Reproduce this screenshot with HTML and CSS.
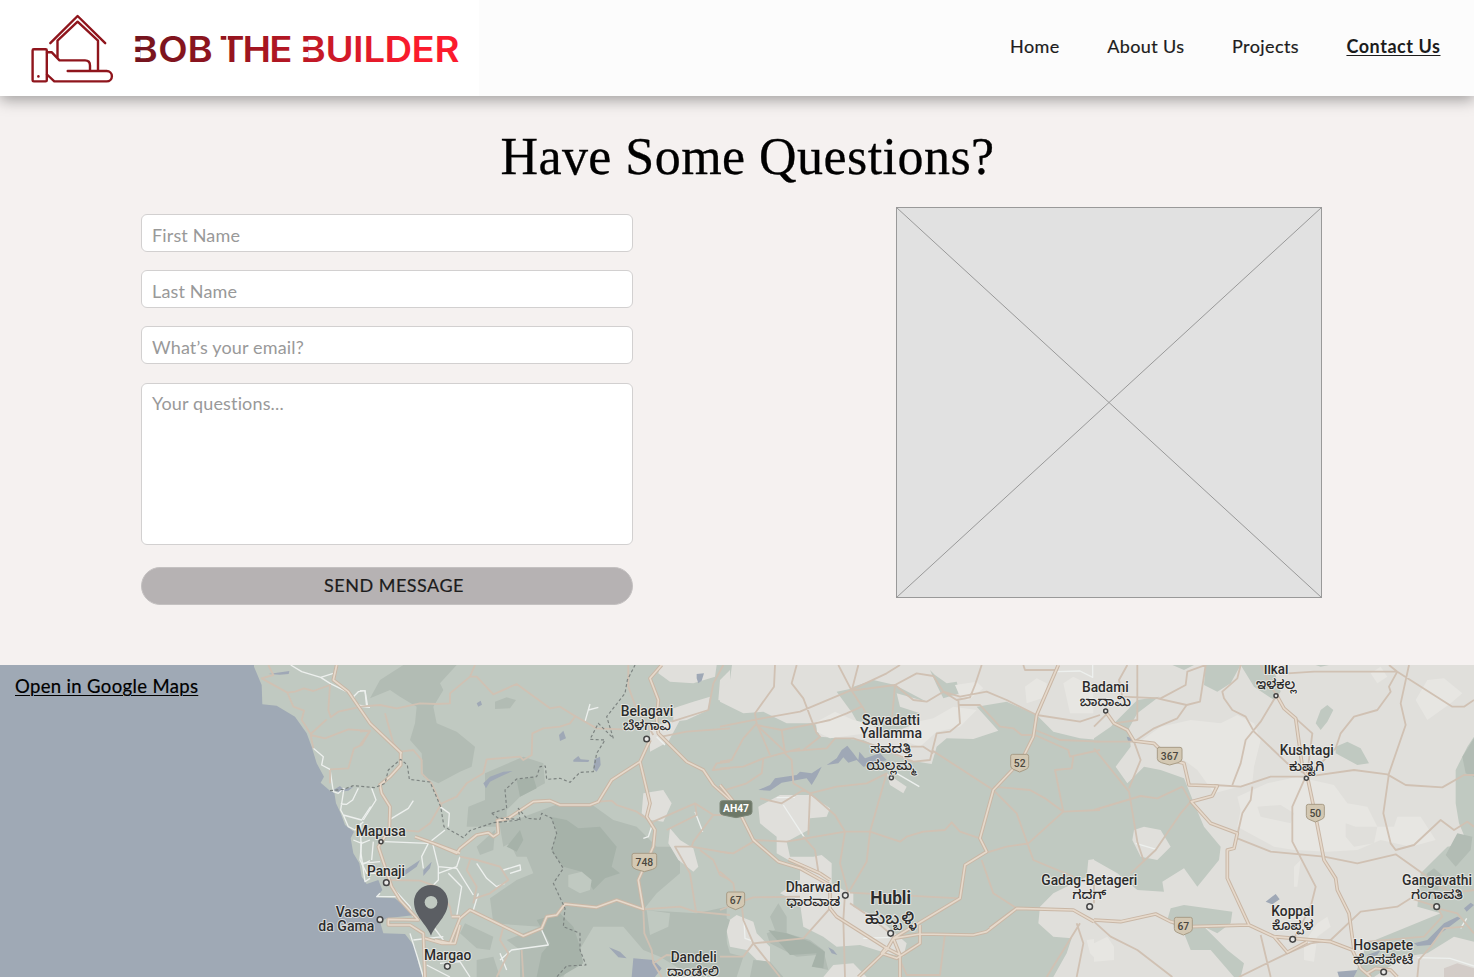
FILE: index.html
```html
<!DOCTYPE html>
<html lang="en">
<head>
<meta charset="utf-8">
<title>Bob the Builder – Contact Us</title>
<link rel="stylesheet" href="styles.css">
</head>
<body>
<header class="site-header">
  <a class="brand" href="#" aria-label="Bob the Builder">
    <svg class="brand-art" viewBox="0 0 479 96" width="479" height="96">
      <defs>
        <linearGradient id="brandRed" gradientUnits="userSpaceOnUse" x1="123" y1="0" x2="418" y2="0">
          <stop offset="0" stop-color="#73141f"/><stop offset=".3" stop-color="#96141f"/><stop offset=".65" stop-color="#d31a29"/><stop offset=".85" stop-color="#fb1b2d"/><stop offset="1" stop-color="#fb1b2d"/>
        </linearGradient>
      </defs>
      <g class="brand-mark">
        <path d="M50.3 43.2 77.6 16 105.2 43.2"/>
        <path d="M57.5 57V40.6L77.6 21.7 98 40.6V70.5"/>
        <rect x="32.6" y="49.2" width="14.2" height="32.2" rx="1.2"/>
        <path d="M47 52.2h4.6L59.500 60.400H85q5 0 5 5V70.500"/>
        <path d="M67.700 71h39a5.200 5.200 0 0 1 0 10.400H54.300L47 74.500"/>
        <circle class="brand-button" cx="38.400" cy="76.400" r="1.300"/>
      </g>
      <text class="brand-name" transform="scale(1.1 1)" y="62" x="120.400 143.800 170.400 199.400 220.400 244.900 273.100 296 320.800 330.400 349.500 374 394.900">BOBTHEBUILDER</text>
      <g class="brand-cut">
        <path d="M134 41.500h6.500v5.300h-6.500zM134 52h6.500v5.300h-6.500zM302 41.500h6.500v5.300h-6.500zM302 52h6.500v5.300h-6.500zM226.300 35h1.500v8h-1.500z"/>
      </g>
    </svg>
  </a>
  <nav class="nav">
    <a class="nav-home" href="#">Home</a>
    <a class="nav-about" href="#">About Us</a>
    <a class="nav-projects" href="#">Projects</a>
    <a class="nav-current" href="#">Contact Us</a>
  </nav>
</header>
<main>
  <section class="contact">
    <h1>Have Some Questions?</h1>
    <div class="columns">
      <form class="form">
        <input class="field" type="text" placeholder="First Name">
        <input class="field" type="text" placeholder="Last Name">
        <input class="field" type="email" placeholder="What’s your email?">
        <textarea class="field area" placeholder="Your questions..."></textarea>
        <button class="send" type="button">SEND MESSAGE</button>
      </form>
      <svg class="placeholder" viewBox="0 0 426 391" width="426" height="391">
        <rect x=".5" y=".5" width="425" height="390"/>
        <path d="M.5.5 425.500 390.500M425.500.5.5 390.500"/>
      </svg>
    </div>
  </section>
  <section class="map">
    <svg class="map-art" viewBox="0 15 4422 936" width="1474" height="312">
      <!-- land -->
      <path class="green" d="M762 0 762 20 785 75 787 133 830 137 885 170 920 220 935 260 950 310 972 350 962 368 990 392 1003 398 1008 430 1022 460 1035 495 1062 515 1052 535 1060 580 1078 610 1085 650 1100 672 1135 660 1147 690 1130 712 1185 715 1245 765 1160 775 1140 785 1150 820 1215 822 1245 860 1255 910 1270 960H4422V0Z"/>
      <g transform="translate(1080 0)">
        <path class="green-dark" d="M60 60 130 15H290L240 70 250 90 220 140 230 190 290 215 345 260 335 320 300 335 235 370 190 350 185 280 150 240 165 190 170 140 120 110 90 90 30 115ZM405 125 440 112 468 120 450 145 405 147ZM375 340 490 290 550 310 555 370 480 410 440 450 440 490 600 430 690 430 760 480 830 500 890 560 960 560 960 640 890 700 850 750 1010 760 1100 740V951H1000L900 890 850 870 790 800 700 800 610 951H480V870L440 840 540 800 400 790 390 715 470 660 520 640 500 590 470 590 450 550 430 560 420 500 320 500 325 440 375 420ZM350 560 405 510 400 570 360 585ZM315 790 400 830 390 870 350 865 300 820ZM350 900 400 890 420 951H350Z"/>
        <path class="green-deep" d="M570 470 620 480 655 505 720 500 770 560 755 620 780 640 735 655 700 690 665 635 610 620 575 575 590 510ZM530 780 600 760 640 800 660 860 670 910 600 951H530L545 880 570 850ZM470 360 520 350 530 385 480 410ZM440 560 480 510 490 540 470 575Z"/>
        <path class="green" d="M625 645 665 635 695 660 690 690 660 700 625 680ZM860 750 930 760 925 800 870 825Z"/>
        <path class="grey" d="M900 15H1070L1065 50 1000 70 930 65 895 40ZM940 145 1000 125 1050 110 1045 150 980 180 940 185ZM1110 30 1080 60 1075 120 1110 130ZM850 400 910 390 935 430 910 485 870 480 845 460ZM930 505 960 540 1000 565 1015 620 1000 635 955 600 925 550ZM870 200 960 180 925 245 870 275Z"/>
        <path class="water" d="M350 130 362 122 366 134 355 140ZM597 225 610 212 618 235 600 243ZM640 300 655 288 662 298 688 300 685 306 640 305ZM703 298 720 290 722 315 710 335 700 328ZM370 370 390 350 430 335 458 333 420 350 390 365 378 385ZM135 630 180 600 170 620 135 645ZM190 630 215 605 210 625 190 648ZM1010 42 1032 40 1025 62 1015 70 1010 55ZM747 862 780 875 800 895 775 892ZM820 895 880 900 905 925 885 951H815Z"/>
      </g>
      <path class="water" d="M805 42 868 33 866 42 840 44ZM1000 390 1020 378 1030 388 1060 380 1045 392 1015 396Z"/>
      <g transform="translate(2160 0)">
        <path class="grey" d="M38 0 30 60 0 90V125L70 160 130 155 200 190 285 190 300 230 430 240 560 300 635 312 650 260 680 235 760 237 835 212 770 140 860 125 950 165 1000 215 1080 235 1140 240V0ZM115 440 180 405 270 405 330 445 320 470 270 475 265 510 200 545 210 590 280 590 305 585 335 610 335 670 370 690 400 700 400 740 470 770 560 850 550 890 500 880 420 855 350 860 310 830 250 800 240 730 180 700 240 660 240 620 170 580 170 530 120 490ZM15 790 50 765 100 785 110 820 150 860 150 905 110 900 80 870 30 860ZM500 340 560 380 550 400 510 375ZM310 951 340 915 400 910 440 951ZM1140 595 1105 600 1100 650 1000 700 960 740 955 790 1000 830 1055 835 1040 880 1000 951H1140Z"/>
        <path class="green" d="M400 80 460 60 525 75 620 125 530 100 540 140 600 160 590 190 500 225 450 190 420 200 380 130ZM350 95 400 85 435 140 390 150ZM630 30 645 45 680 70 710 65 720 100 670 115 650 75Z"/>
        <path class="light" d="M290 185 345 155 400 180 440 190 440 220 330 235 290 215ZM570 190 640 175 700 140 770 150 720 200 650 215 600 260 560 245ZM705 75 770 65 790 85 745 120 720 110ZM915 80 950 55 980 70 980 110 920 130ZM1030 70 1060 50 1120 80 1120 160 1050 160ZM1100 840 1140 835V910L1110 880Z"/>
        <path class="green-dark" d="M150 770 175 730 200 770 200 820 270 840 310 870 325 930 280 920 290 885 230 890 150 850 140 820 165 810ZM0 765 30 780 15 830 30 880 70 890 50 951H0ZM100 900 150 905 190 951H90Z"/>
        <path class="green-deep" d="M145 810 200 820 270 845 315 875 310 925 275 920 290 880 210 885Z"/>
        <path class="water" d="M115 390 150 375 165 355 230 345 240 335 275 340 305 320 290 350 275 375 260 355 185 368 150 392ZM320 315 350 295 365 270 382 257 400 280 415 300 418 275 435 295 480 280 500 300 460 315 430 320 410 300 385 308 370 292 355 310ZM325 862 340 870 352 885 335 880Z"/>
      </g>
      <g transform="translate(3282 0)">
        <path class="grey" d="M0 0H1140V960H0Z"/>
        <path class="green" d="M0 235 50 200 130 120 195 110 130 160 105 205 110 260 65 320 100 370 150 320 200 330 270 355 300 430 330 500 380 560 375 600 310 680 270 625 205 665 210 695 130 690 70 640 0 600ZM335 15H440L410 70 370 95 330 75ZM440 15H535L560 95 540 120 480 80ZM665 190 680 150 700 135 718 150 700 185 680 210ZM725 260 760 245 800 265 825 310 790 315 725 280ZM230 745 270 735 415 755 410 790 370 820 330 800 400 870 450 910 440 951H420L350 870 290 870 270 820 220 780ZM1140 230 1120 260 1085 330 1085 430 1095 490 1120 550 1060 560 980 640 970 740 1040 760 820 850 780 951H840L930 890 1000 880 1080 830 1140 845ZM235 15H300L270 30ZM665 15H705L680 20Z"/>
        <path class="green-dark" d="M1140 235 1105 290 1115 340 1140 350ZM1090 520 1135 530 1130 570 1085 620 1055 585ZM1000 640 1020 625 1050 650 1030 690 980 680Z"/>
        <path class="grey" d="M115 540 120 510 150 500 200 510 230 560 190 600 140 590Z"/>
        <path class="light" d="M145 240 200 200 290 180 380 190 430 165 480 190 500 240 480 320 475 370 360 400 310 330 270 300 200 260ZM430 410 520 370 610 350 720 375 760 430 820 440 850 500 900 500 910 470 980 470 1025 540 950 560 860 540 790 570 700 575 600 570 540 560 430 500 440 450ZM965 120 1000 60 1050 55 1105 100 1070 130 1000 180ZM600 620 620 600 610 680 600 680ZM630 850 670 790 700 770 710 800 670 830 660 905 630 900ZM0 850 40 830 60 860 60 900 0 905ZM830 40 860 20 880 50 850 70Z"/>
        <path class="grey" d="M510 260 540 240 580 280 560 300ZM490 440 560 435 600 460 590 490 500 470ZM755 490 785 500 850 500 840 550 780 560 755 530Z"/>
        <path class="water" d="M515 725 545 702 557 718 535 733ZM98 230 118 235 122 248 102 242ZM960 850 1000 840 1050 790 1090 770 1100 775 1040 820 1010 855 970 858ZM1110 745 1130 728 1140 735 1118 755ZM730 935 790 930 780 951H735ZM820 885 860 870 850 885 820 895Z"/>
        <path class="rose" d="M1050 925 1090 910 1140 925V951H1050Z"/>
      </g>
      <!-- minor white roads -->
      <g class="white-road">
        <path d="M872 15 905 35 962 52 990 70 1040 95M962 52 1000 40M1060 110 1075 95 1095 92 1103 140 1072 135M1060 110 1072 138 1110 142M940 265 970 290 965 315 990 328 1000 395 1015 400 1032 385 1022 450 1030 465 1085 480 1112 440M1075 385 1058 420 1040 433 1022 432M1030 465 1045 500 1065 510 1090 485M1060 540 1085 550 1110 540M1082 490 1083 580 1095 665 1110 655M1085 615 1110 602"/>
        <g transform="translate(1080 0)"><path d="M0 92 15 92 20 140M35 385 48 420 10 480M160 422 145 445 90 478M75 545 205 550 185 590 190 625M205 550 255 510M218 550 235 620 235 660 215 680M235 640 290 620 300 590M265 640 305 680 290 770M235 620 290 625 340 705M350 610 380 655 410 680 435 670M430 630 480 615 482 630 450 640M5 545 0 600 20 640 60 640M5 610 60 605M40 545 35 600M60 700 50 710 110 710M95 680 150 740 160 770M150 820 175 900 190 951M160 840 250 830M340 750 355 700M545 810 565 855 455 870 420 900M240 440 268 460 265 500M675 185 690 132M685 150 715 142M850 535 865 530 875 500M1005 455 1028 515M890 230 915 255M210 690 220 800 250 840M240 910 300 905 330 951M200 915 270 951M420 880 440 930"/></g>
        <g transform="translate(2160 0)"><path d="M190 435 255 535M170 413 225 412M530 340 598 380M72 780 75 835 95 842M430 835 510 832M1010 35 1080 33 1118 52V15"/></g>
        <g transform="translate(3282 0)"><path d="M125 550 187 568M970 893 1068 895 1140 918M1100 805 1118 775"/></g>
      </g>
      <!-- secondary roads -->
      <g class="minor-road">
        <path d="M805 15 820 45 785 55 862 98 885 95 912 85 940 93 990 75 985 150 992 172 1015 155 1070 143M862 98 880 140 912 152 905 180 932 222 980 178M932 225 975 235 1045 208 1110 213 1085 255 1062 265 1045 325 990 328M932 225 940 265M990 330V370"/>
        <g transform="translate(1080 0)"><path d="M345 15 330 50 350 50 400 103 470 72 570 145 600 140 640 165 710 205 790 208M330 50 270 100 270 130 230 132 180 130 110 145 60 135 0 140M645 170 630 190 600 200 550 205 517 220 515 285 490 300 480 290 380 298 370 340 320 370 290 410 245 430 210 490 175 515 125 510M75 160 100 250 122 275 160 270 185 300 185 340 215 370 245 440M300 590 350 600 420 620 445 660 390 700 345 715M330 600 320 630 350 680 340 730M430 800 420 840 445 880 410 951M485 870 490 951M805 15 805 80 825 135 880 225M715 425 755 422 770 435 830 455 880 490M880 485 1005 430 1010 465 920 510M1005 430 1060 465 1110 465M1060 465 1000 545 995 560 945 560 990 640 1008 755M995 560 1110 580M1020 570 1060 600 1080 645 1110 660M850 748 960 740 1005 755 1110 765M850 748 853 820 875 870 880 910 905 951M905 230 980 215 1110 205M935 185 1045 150 1060 70 1090 15M1110 305 1070 310 1058 330 1110 325M0 215 30 212 0 255M880 910 920 885 980 890M90 660 180 662 230 680 270 740 275 770"/></g>
        <g transform="translate(2160 0)"><path d="M165 15 162 80 105 160 110 190 70 235 35 300 0 305M230 15 215 70 250 115 290 220 300 230 250 270M0 200 110 178 240 155 390 92 500 40 540 15M355 15 395 92 415 15M395 92 525 75 590 40 640 48 670 95 710 120 750 112 765 75 785 15M395 92 430 145 440 165M525 75 515 190M525 75 580 120 620 125 670 95M670 95 720 110 800 95 860 120 950 165 1080 185 1140 165M715 120 720 190 690 215 650 220 630 300 580 305 460 255 400 235 345 235 320 265 195 275 110 195 185 210 285 190 330 180 380 160 425 140M185 210 195 280 215 300 220 370 270 400M0 325 70 320 130 295 240 265M110 190 150 285M130 295 125 340 80 370 0 395M120 415 185 430 250 390 270 400 345 465 375 515 450 515 500 340 440 370 350 380 270 400 265 525M100 540 200 545 375 515 360 610 385 700M250 530 285 570 295 635M450 515 440 605 390 690M450 515 540 545 560 530 610 515 675 510 695 487 720 515 780 535M0 575 40 580 100 545M635 270 820 390 890 460 940 600 1060 650M715 135 780 135 840 200 880 205 905 225 945 225 1045 270 1050 290 1140 270M945 210 1020 240 1140 245M820 380 930 390 975 415 1030 455 1140 450M1060 290 1055 325 1005 330 1030 455 925 550 860 560 800 578M785 600 820 700 890 745M390 698 720 715M240 710 100 712 0 750M375 700 370 780 375 951M330 745 250 835 100 850 180 951M0 890 70 890 100 850 70 780 65 730M675 820 660 945 560 945 540 900M1070 790 1090 850 1070 951M1080 790 980 951M0 635 40 670 45 700M565 260 610 260 640 280M390 730 450 770 510 820M910 15 915 30 1010 30"/></g>
        <g transform="translate(3282 0)"><path d="M130 15V180L60 190M100 15 75 60 85 110 200 115 275 75 280 35 335 15 318 125 278 135 190 115M440 15 430 55 385 95 390 115 415 150 455 170 480 215 580 310 640 345M545 110 500 185 455 240 440 310 415 375M278 135 250 175 180 205 120 245 0 245M0 265 105 395 130 545 150 605M0 450 140 408 190 415 265 380M120 245 140 300 105 385M290 425 260 460 185 570 110 640M265 380 290 425M360 375 440 380 530 350 640 350 780 330 880 343 935 375 1045 382 1110 345 1140 345M475 380 470 420 445 460 430 525M430 535 530 575 690 590 790 610 905 583 1000 650 1070 700 1140 690M580 40 660 35 910 35 1075 140 1110 140 1140 120M910 35 885 80 890 95 850 150 780 170 740 220 725 265 670 320 640 345M945 15 920 130 935 195 885 340 868 460 890 550 905 570 960 555 1040 480 1080 510 1120 485 1140 500M635 350 595 440 595 545 665 680 650 740 600 835M605 175 655 220 640 340M0 785 50 830 130 870 235 951M500 825 530 951M435 951 580 880 650 850 710 840 800 755 910 740 950 715 1030 740 1045 770 990 830 820 845M1140 820 1090 760 1010 740M1110 800 1050 805 1010 860 975 900 970 951M0 670 0 730M0 200 40 160M500 15 530 80 545 100M885 15 910 35"/></g>
      </g>
      <!-- major roads: casing below, fill above -->
      <g class="major-case">
        <g id="major">
          <path d="M1010 15 1000 60 1045 95 1110 190 1205 280"/>
          <g transform="translate(1080 0)"><path d="M122 275V315L90 350 60 375 65 400 90 440 88 510 55 560 75 620 95 680 120 720 175 780 85 778 85 795 150 795 190 820 195 951M165 530 220 550 290 580 300 565 350 525 385 518 400 530 415 520 412 482 445 475 520 425 570 422 600 435 690 435 715 425 755 360 840 305 870 240M840 305 870 430 860 470 885 510 880 560 835 660 850 748 770 720 710 742 615 732 590 765 560 770 545 805 490 828 330 750 300 775 270 850 225 840M300 580 220 550M195 835 245 850 285 850 300 795M905 15 870 55 895 120 890 180 895 220 980 305 1030 330 1060 375 1110 420M275 770H300"/></g>
          <g transform="translate(2160 0)"><path d="M0 375 45 430 100 540 175 605 240 625 330 675 330 745 350 770 500 865 540 885V951M205 598 300 640 330 660M1015 15 950 165 940 230 905 300 820 390 780 535 800 575 735 615 720 715 520 835 500 870 415 951M520 835 600 822 760 825 800 815 890 745 1060 750 1122 785M600 795V850L530 895 485 880 500 860M520 835 540 885M810 805 890 745"/></g>
          <g transform="translate(3282 0)"><path d="M35 155 60 190 100 210 120 243 180 250 230 300 270 310 285 375 370 378 355 408 292 425 350 490 430 520 420 565 400 570V655L465 795 290 800 230 785 185 762 80 785 0 780M465 795 540 830 710 845 775 870 800 925 830 951M545 100 570 145 605 175 625 320 640 350 665 470 690 600 725 655 730 690 765 760 780 870M540 830 580 877 640 845M820 940 845 925 890 930 910 951"/></g>
        </g>
      </g>
      <use class="major-fill" href="#major"/>
      <g class="border">
        <path d="M990 392 1030 388 1060 377 1125 383 1155 370 1165 330 1202 298 1222 315 1228 358 1290 366 1322 440 1332 500 1390 533 1410 512 1480 488 1560 480 1555 445 1580 475 1620 478 1625 460 1655 475 1670 520 1655 570 1690 625 1660 670 1695 745 1690 800 1740 820V870L1758 915 1700 918 1670 951M1475 460 1520 445 1515 390 1550 357 1610 350 1620 320 1636 318 1640 358 1680 355 1710 367 1740 337 1780 335 1790 280 1815 240 1770 238 1795 190 1840 235 1820 170 1875 100 1882 60 1905 15M1475 460 1495 475 1560 478"/>
      </g>
      <!-- route shields -->
      <g class="shield">
        <path d="M1902 580h62q6 0 6 6v30q0 8-12 12l-25 7-25-7q-12-4-12-12v-30q0-6 6-6ZM2186 696h42q6 0 6 6v28q0 8-8 11l-19 8-19-8q-8-3-8-11v-28q0-6 6-6ZM3038 283h42q6 0 6 6v28q0 8-8 11l-19 8-19-8q-8-3-8-11v-28q0-6 6-6ZM3478 262h62q6 0 6 6v28q0 8-12 12l-25 7-25-7q-12-4-12-12v-28q0-6 6-6ZM3925 433h42q6 0 6 6v28q0 8-8 11l-19 8-19-8q-8-3-8-11v-28q0-6 6-6ZM3529 772h42q6 0 6 6v28q0 8-8 11l-19 8-19-8q-8-3-8-11v-28q0-6 6-6Z"/>
        <path class="shield-ah" d="M2167 422h82q7 0 7 7v27q0 7-9 9l-39 8-39-8q-9-2-9-9v-27q0-7 7-7Z"/>
      </g>
      <g class="shield-text">
        <text x="1933" y="618">748</text><text x="2207" y="733">67</text><text x="3059" y="321">52</text><text x="3509" y="300">367</text><text x="3946" y="471">50</text><text x="3550" y="809">67</text><text class="ah-text" x="2208" y="457">AH47</text>
      </g>
      <!-- towns -->
      <g class="town">
        <circle cx="1143" cy="545" r="6"/><circle cx="1159" cy="668" r="8.500"/><circle cx="1140" cy="779" r="8.500"/><circle cx="1342" cy="919" r="8.500"/><circle cx="1940" cy="237" r="8.500"/><circle cx="2674" cy="353" r="6"/><circle cx="2536" cy="706" r="8.500"/><circle cx="2672" cy="820" r="8.500"/><circle cx="3269" cy="740" r="8.500"/><circle cx="3317" cy="153" r="6"/><circle cx="3828" cy="107" r="6"/><circle cx="3919" cy="355" r="6"/><circle cx="3878" cy="838" r="8.500"/><circle cx="4310" cy="740" r="8.500"/><circle cx="4151" cy="936" r="8.500"/>
      </g>
      <g class="label">
        <text x="1142" y="528" textLength="150" lengthAdjust="spacingAndGlyphs">Mapusa</text>
        <text x="1158" y="648" textLength="114" lengthAdjust="spacingAndGlyphs">Panaji</text>
        <text x="1065" y="770" textLength="116" lengthAdjust="spacingAndGlyphs">Vasco</text>
        <text x="1039" y="812" textLength="168" lengthAdjust="spacingAndGlyphs">da Gama</text>
        <text x="1343" y="899" textLength="142" lengthAdjust="spacingAndGlyphs">Margao</text>
        <text x="1941" y="169" textLength="158" lengthAdjust="spacingAndGlyphs">Belagavi</text><text class="kn" x="1941" y="211" textLength="144" lengthAdjust="spacingAndGlyphs">ಬೆಳಗಾವಿ</text>
        <text x="2081" y="907" textLength="138" lengthAdjust="spacingAndGlyphs">Dandeli</text><text class="kn" x="2079" y="948" textLength="156" lengthAdjust="spacingAndGlyphs">ದಾಂಡೇಲಿ</text>
        <text x="2673" y="194" textLength="174" lengthAdjust="spacingAndGlyphs">Savadatti</text><text x="2673" y="235" textLength="186" lengthAdjust="spacingAndGlyphs">Yallamma</text>
        <text class="kn" x="2673" y="280" textLength="124" lengthAdjust="spacingAndGlyphs">ಸವದತ್ತಿ</text><text class="kn" x="2673" y="330" textLength="148" lengthAdjust="spacingAndGlyphs">ಯಲ್ಲಮ್ಮ</text>
        <text x="2439" y="696" textLength="164" lengthAdjust="spacingAndGlyphs">Dharwad</text><text class="kn" x="2440" y="738" textLength="162" lengthAdjust="spacingAndGlyphs">ಧಾರವಾಡ</text>
        <text class="city" x="2672" y="732" textLength="122" lengthAdjust="spacingAndGlyphs">Hubli</text><text class="kn city-kn" x="2672" y="792" textLength="154" lengthAdjust="spacingAndGlyphs">ಹುಬ್ಬಳ್ಳಿ</text>
        <text x="3268" y="674" textLength="288" lengthAdjust="spacingAndGlyphs">Gadag-Betageri</text><text class="kn" x="3268" y="718" textLength="102" lengthAdjust="spacingAndGlyphs">ಗದಗ್</text>
        <text x="3316" y="95" textLength="140" lengthAdjust="spacingAndGlyphs">Badami</text><text class="kn" x="3316" y="137" textLength="154" lengthAdjust="spacingAndGlyphs">ಬಾದಾಮಿ</text>
        <text x="3828" y="41" textLength="74" lengthAdjust="spacingAndGlyphs">Ilkal</text><text class="kn" x="3828" y="88" textLength="120" lengthAdjust="spacingAndGlyphs">ಇಳಕಲ್ಲ</text>
        <text x="3920" y="286" textLength="162" lengthAdjust="spacingAndGlyphs">Kushtagi</text><text class="kn" x="3920" y="333" textLength="106" lengthAdjust="spacingAndGlyphs">ಕುಷ್ಟಗಿ</text>
        <text x="3878" y="768" textLength="128" lengthAdjust="spacingAndGlyphs">Koppal</text><text class="kn" x="3878" y="811" textLength="124" lengthAdjust="spacingAndGlyphs">ಕೊಪ್ಪಳ</text>
        <text x="4311" y="674" textLength="210" lengthAdjust="spacingAndGlyphs">Gangavathi</text><text class="kn" x="4311" y="718" textLength="156" lengthAdjust="spacingAndGlyphs">ಗಂಗಾವತಿ</text>
        <text x="4150" y="869" textLength="180" lengthAdjust="spacingAndGlyphs">Hosapete</text><text class="kn" x="4150" y="912" textLength="180" lengthAdjust="spacingAndGlyphs">ಹೊಸಪೇಟೆ</text>
      </g>
      <path class="pin" d="M1293 827C1280 792 1242 769 1242 726a51 51 0 0 1 102 0C1344 769 1306 792 1293 827Z"/>
      <circle class="green" cx="1293" cy="727" r="19"/>
    </svg>
    <a class="map-link" href="#">Open in Google Maps</a>
  </section>
</main>
</body>
</html>
```
FILE: styles.css
```css
* { box-sizing: border-box; }
body { margin: 0; background: #f5f1f0; color: #1c1c1c; font-family: Lato, "Open Sans", sans-serif; font-size: 18px; overflow-x: hidden; }
a { color: inherit; }
.site-header { position: relative; z-index: 1; display: flex; justify-content: space-between; height: 96px; background: #fcfcfc; box-shadow: 0 4px 14px rgba(0, 0, 0, .35); }
.brand { display: block; background: #fff; height: 96px; }
.brand-art, .map-art, .placeholder { display: block; }
.brand-mark { fill: none; stroke: #8f151c; stroke-width: 2.4; stroke-linecap: round; stroke-linejoin: round; }
.brand-button { fill: #8f151c; stroke: none; }
.brand-name { font: 600 34.8px Inter, sans-serif; fill: url(#brandRed); }
.brand-cut { fill: #fff; }
.nav { display: flex; gap: 47.5px; padding: 35px 33.5px 0 0; line-height: 22px; letter-spacing: .4px; -webkit-text-stroke: .2px; }
.nav a { text-decoration: none; white-space: nowrap; }
.nav .nav-current { font-weight: 700; letter-spacing: .55px; text-decoration: underline; text-decoration-thickness: 1px; text-underline-offset: 2px; -webkit-text-stroke: 0; }
.contact { height: 569px; padding: 32px 152px 0 141px; }
h1 { margin: 0; padding-left: 32px; height: 60px; text-align: center; font: 400 52px/58px Georgia, "Liberation Serif", serif; letter-spacing: .45px; color: #000; -webkit-text-stroke: .3px #000; }
.columns { display: flex; justify-content: space-between; padding-top: 19px; }
.form { display: flex; flex-direction: column; width: 492px; padding-top: 7px; }
.field { display: block; width: 100%; height: 38px; margin: 0 0 18.2px; padding: 4px 10px 0; border: 1px solid #d2d0d0; border-radius: 6px; background: #fff; font: 400 18px/24px Lato, sans-serif; letter-spacing: .15px; outline: 0; resize: none; }
.field::placeholder { color: #999; opacity: 1; }
.area { height: 162px; margin-bottom: 22.5px; padding-top: 7px; }
.send { height: 38px; padding: 0 0 3px 14px; border: 1px solid #c4c1c1; border-radius: 19px; background: #b6b2b3; color: #1c1c1c; font: 400 18px/22px Lato, sans-serif; letter-spacing: .5px; -webkit-text-stroke: .2px; }
.placeholder { fill: #e1e1e1; stroke: #999; stroke-width: 1; }
.map { position: relative; height: 312px; background: #9fa9b5; overflow: hidden; }
.map-link { position: absolute; left: 15px; top: 10px; line-height: 22px; font-size: 18.5px; letter-spacing: .35px; color: #000; text-decoration-thickness: 1px; text-underline-offset: 2px; -webkit-text-stroke: .2px; }
.green { fill: #c0c9c1; }
.green-dark { fill: #b2bcb4; }
.green-deep { fill: #a6b2a9; }
.grey { fill: #e0dfdb; }
.light { fill: #e7e6e2; }
.rose { fill: #d3ccc8; }
.water { fill: #9fa8b6; }
.white-road, .minor-road, .major-case, .major-fill, .border { fill: none; stroke-linejoin: round; }
.white-road { stroke: #edf0ee; stroke-width: 4; }
.minor-road { stroke: #d0c1b3; stroke-width: 5.5; }
.major-case { stroke: #c9b7a6; stroke-width: 11; }
/* the shared major-road group inherits its stroke from whichever parent draws it */
.major-fill { stroke: #e6d9cb; stroke-width: 5; }
.border { stroke: #7c8380; stroke-width: 3.5; stroke-dasharray: 9 7; }
.shield { fill: #d3c8b3; stroke: #a89c86; stroke-width: 3; }
.shield-ah { fill: #6d7868; stroke: #7d8778; }
.shield-text { font: 500 31px Roboto, sans-serif; fill: #4c4840; text-anchor: middle; }
.ah-text { fill: #fff; font-weight: 700; }
.town { fill: #e8e8e6; stroke: #444; stroke-width: 4.5; }
.label { font: 500 43px Roboto, sans-serif; fill: #2c2c2c; text-anchor: middle; stroke: rgba(240, 240, 238, .75); stroke-width: 6px; paint-order: stroke; stroke-linejoin: round; }
.kn { font: 500 40px "Noto Sans Kannada", "Noto Sans", sans-serif; }
.city { font-size: 54px; font-weight: 700; }
.city-kn { font-size: 50px; }
.pin { fill: #5b5e63; }
```
